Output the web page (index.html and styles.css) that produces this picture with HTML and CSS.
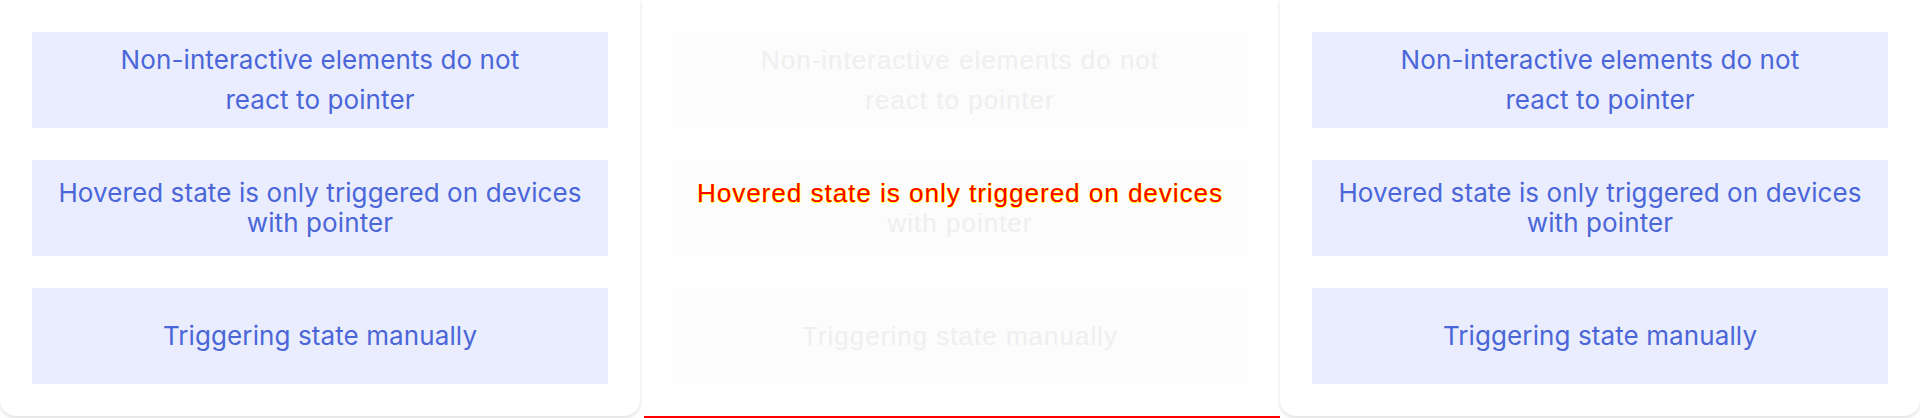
FILE: index.html
```html
<!DOCTYPE html>
<html>
<head>
<meta charset="utf-8">
<link rel="stylesheet" href="styles.css">
</head>
<body>
<div class="row">
  <div class="col">
    <div class="card">
      <div class="box tall"><div class="txt">Non-interactive elements do not<br>react to pointer</div></div>
      <div class="box"><div class="txt">Hovered state is only triggered on devices<br>with pointer</div></div>
      <div class="box"><div class="txt">Triggering state manually</div></div>
    </div>
  </div>
  <div class="col">
    <div class="card plain ghost">
      <div class="box tall"><div class="txt">Non-interactive elements do not<br>react to pointer</div></div>
      <div class="box"><div class="txt"><span class="hl">Hovered state is only triggered on devices</span><br>with pointer</div></div>
      <div class="box"><div class="txt">Triggering state manually</div></div>
    </div>
    <div class="redline"></div>
  </div>
  <div class="col">
    <div class="card">
      <div class="box tall"><div class="txt">Non-interactive elements do not<br>react to pointer</div></div>
      <div class="box"><div class="txt">Hovered state is only triggered on devices<br>with pointer</div></div>
      <div class="box"><div class="txt">Triggering state manually</div></div>
    </div>
  </div>
</div>
</body>
</html>
```
FILE: styles.css
```css
html, body {
  margin: 0;
  padding: 0;
  background: #ffffff;
  overflow: hidden;
}
.row {
  display: flex;
  width: 1920px;
}
.col {
  width: 640px;
  display: flex;
  flex-direction: column;
  position: relative;
}
.col:first-child { z-index: 2; }
.col:last-child { z-index: 2; }
.card {
  background: #ffffff;
  border-radius: 0 0 16px 16px;
  box-shadow: 0 2px 4px rgba(0,0,0,0.12);
  padding: 32px;
  display: flex;
  flex-direction: column;
  gap: 32px;
}
.card.plain {
  box-shadow: none;
  border-radius: 0;
}
.box {
  height: 96px;
  background: #eaedfe;
  color: #4a66d8;
  font-family: Inter, "Noto Sans", sans-serif;
  font-size: 26px;
  letter-spacing: 0.1px;
  line-height: 30px;
  text-align: center;
  display: flex;
  align-items: center;
  justify-content: center;
}
.box.tall { line-height: 40px; }
.txt { text-align: center; }
.ghost .box {
  background: #fcfcfc;
  color: #efefef;
  font-family: "Liberation Sans", Arial, sans-serif;
  letter-spacing: 1px;
}
.hl {
  color: #ff0000;
  text-shadow: 1px 0 0 #ffff00, 0 1px 0 #ffff00;
}
.redline {
  height: 2px;
  margin-left: 4px;
  background: #ff0000;
}
```
